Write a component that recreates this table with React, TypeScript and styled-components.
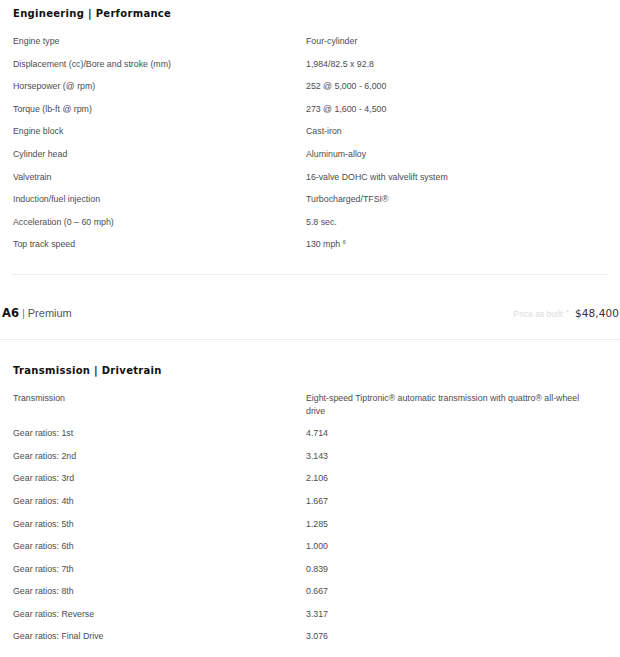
import React from "react";
import styled, { createGlobalStyle } from "styled-components";

const Global = createGlobalStyle`
  html, body { margin: 0; padding: 0; background: #fff; }
  body { font-family: "Liberation Sans", Arial, sans-serif; }
`;

const Page = styled.div`
  width: 620px;
  display: flex;
  flex-direction: column;
`;

const Section = styled.section<{ $top: number; $bottom: number }>`
  padding: ${(p) => p.$top}px 12px ${(p) => p.$bottom}px 13px;
  display: flex;
  flex-direction: column;
`;

const Heading = styled.h2`
  margin: 0 0 10px 0;
  font-family: "DejaVu Sans", sans-serif;
  font-weight: 700;
  font-size: 10px;
  line-height: 12px;
  letter-spacing: 0.3px;
  color: #111;
`;

const Row = styled.div`
  display: grid;
  grid-template-columns: 293px 1fr;
  padding: 5px 0;
  font-size: 8.8px;
  line-height: 12.6px;
  color: #4d4d4d;
`;

const Label = styled.span``;

const Value = styled.span`
  max-width: 285px;
  sup {
    font-size: 5.5px;
    vertical-align: top;
    line-height: 8px;
  }
`;

const Divider = styled.hr<{ $inset: boolean }>`
  margin: 0 ${(p) => (p.$inset ? "12px" : "0")};
  border: 0;
  border-top: 1px solid #ececec;
  height: 0;
`;

const ModelBar = styled.div`
  display: flex;
  align-items: center;
  justify-content: space-between;
  padding: 30px 1px 18px 2px;
  height: 16px;
`;

const Model = styled.div`
  display: flex;
  align-items: baseline;
  gap: 3px;
`;

const ModelName = styled.span`
  font-family: "DejaVu Sans", sans-serif;
  font-weight: 700;
  font-size: 11.5px;
  color: #111;
`;

const Pipe = styled.span`
  font-size: 11px;
  color: #8a6a9a;
`;

const Trim = styled.span`
  font-size: 11px;
  color: #555;
`;

const Price = styled.div`
  display: flex;
  align-items: baseline;
  gap: 6px;
`;

const PriceLabel = styled.span`
  font-size: 8.5px;
  color: #dcdcdc;
  sup {
    font-size: 6px;
    vertical-align: top;
    line-height: 6px;
    margin-left: 2px;
    color: #c8c8c8;
  }
`;

const PriceValue = styled.span`
  font-family: "DejaVu Sans", sans-serif;
  font-size: 10.5px;
  color: #333;
  letter-spacing: 0.1px;
`;

type Spec = [string, React.ReactNode];

const engineering: Spec[] = [
  ["Engine type", "Four-cylinder"],
  ["Displacement (cc)/Bore and stroke (mm)", "1,984/82.5 x 92.8"],
  ["Horsepower (@ rpm)", "252 @ 5,000 - 6,000"],
  ["Torque (lb-ft @ rpm)", "273 @ 1,600 - 4,500"],
  ["Engine block", "Cast-iron"],
  ["Cylinder head", "Aluminum-alloy"],
  ["Valvetrain", "16-valve DOHC with valvelift system"],
  ["Induction/fuel injection", "Turbocharged/TFSI®"],
  ["Acceleration (0 – 60 mph)", "5.8 sec."],
  ["Top track speed", <>130 mph <sup>6</sup></>],
];

const transmission: Spec[] = [
  ["Transmission", "Eight-speed Tiptronic® automatic transmission with quattro® all-wheel drive"],
  ["Gear ratios: 1st", "4.714"],
  ["Gear ratios: 2nd", "3.143"],
  ["Gear ratios: 3rd", "2.106"],
  ["Gear ratios: 4th", "1.667"],
  ["Gear ratios: 5th", "1.285"],
  ["Gear ratios: 6th", "1.000"],
  ["Gear ratios: 7th", "0.839"],
  ["Gear ratios: 8th", "0.667"],
  ["Gear ratios: Reverse", "3.317"],
  ["Gear ratios: Final Drive", "3.076"],
];

function SpecList({ items }: { items: Spec[] }) {
  return (
    <>
      {items.map(([l, v], i) => (
        <Row key={i}>
          <Label>{l}</Label>
          <Value>{v}</Value>
        </Row>
      ))}
    </>
  );
}

export default function App() {
  return (
    <Page>
      <Global />
      <Section $top={8} $bottom={18}>
        <Heading>Engineering | Performance</Heading>
        <SpecList items={engineering} />
      </Section>
      <Divider $inset />
      <ModelBar>
        <Model>
          <ModelName>A6</ModelName>
          <Pipe>|</Pipe>
          <Trim>Premium</Trim>
        </Model>
        <Price>
          <PriceLabel>
            Price as built:<sup>*</sup>
          </PriceLabel>
          <PriceValue>$48,400</PriceValue>
        </Price>
      </ModelBar>
      <Divider $inset={false} />
      <Section $top={25} $bottom={0}>
        <Heading>Transmission | Drivetrain</Heading>
        <SpecList items={transmission} />
      </Section>
    </Page>
  );
}
